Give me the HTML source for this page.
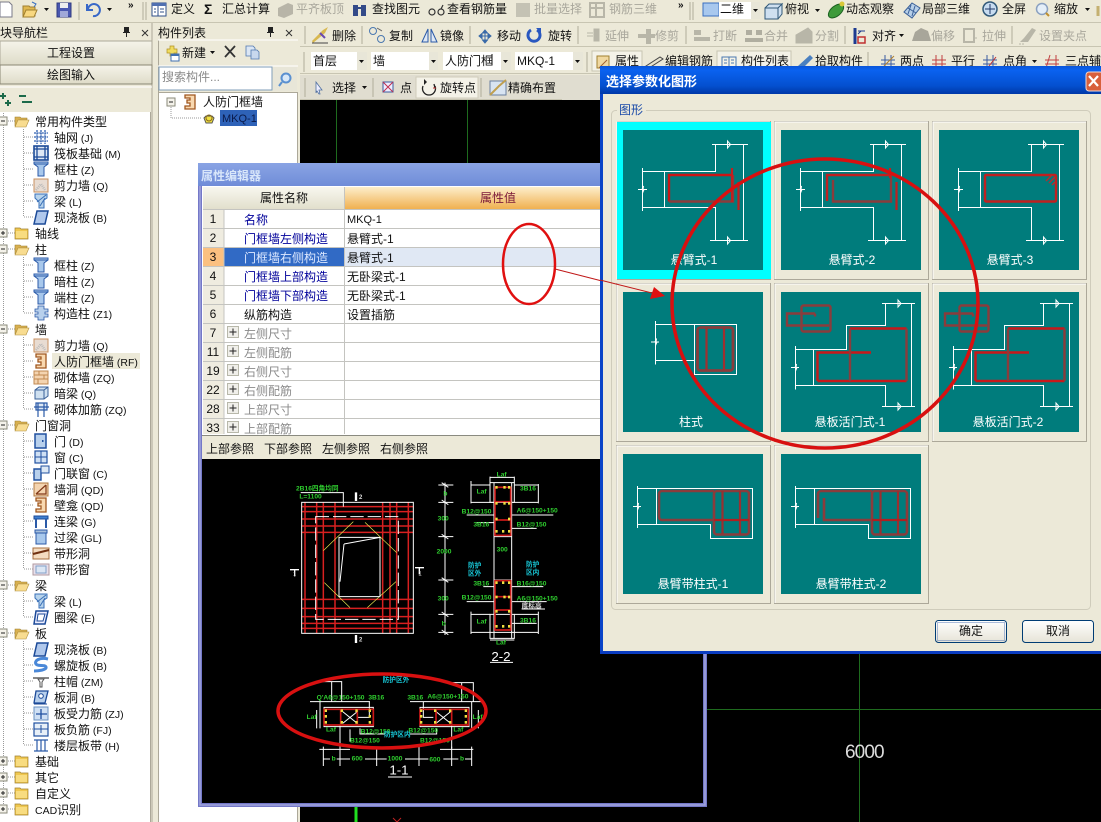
<!DOCTYPE html>
<html><head><meta charset="utf-8">
<style>
html,body{margin:0;padding:0;background:#ece9d8;width:1101px;height:822px;overflow:hidden}
svg{display:block;position:absolute;left:0;top:0}
text{font-family:"Liberation Sans","WenQuanYi Zen Hei","Noto Sans CJK SC",sans-serif;font-size:12px;fill:#111}
.l{font-size:10.5px}
.g{fill:#a9a79c}
.b{fill:#00009a}
.h{fill:#8a8a8a}
.w{fill:#fff}
.d{font-size:20px;fill:#2fcf2f;font-weight:bold}
.c{font-size:20px;fill:#18c8d8;font-weight:bold}
.big{font-size:40px;fill:#fff}
</style></head><body>
<svg width="1101" height="822" viewBox="0 0 1101 822" xmlns="http://www.w3.org/2000/svg">
<defs>
<linearGradient id="btn" x1="0" y1="0" x2="0" y2="1"><stop offset="0" stop-color="#f6f4ea"/><stop offset="1" stop-color="#dedbc8"/></linearGradient>
<linearGradient id="org" x1="0" y1="0" x2="0" y2="1"><stop offset="0" stop-color="#fdeecb"/><stop offset="1" stop-color="#f0b050"/></linearGradient>
<linearGradient id="hd" x1="0" y1="0" x2="0" y2="1"><stop offset="0" stop-color="#f8f7ef"/><stop offset="1" stop-color="#e2dfcc"/></linearGradient>
<linearGradient id="tt" x1="0" y1="0" x2="0" y2="1"><stop offset="0" stop-color="#0a55d8"/><stop offset=".15" stop-color="#0a62f0"/><stop offset=".7" stop-color="#0450d0"/><stop offset="1" stop-color="#0038a8"/></linearGradient>
<linearGradient id="pt" x1="0" y1="0" x2="0" y2="1"><stop offset="0" stop-color="#8aa4e4"/><stop offset="1" stop-color="#6f8cd8"/></linearGradient>
<linearGradient id="okb" x1="0" y1="0" x2="0" y2="1"><stop offset="0" stop-color="#fff"/><stop offset="1" stop-color="#e6e3d6"/></linearGradient>
<g id="fo"><path d="M1 4h5l1 1h6v2H5L2 13H1z" fill="#d8b050" stroke="#a08030" stroke-width=".6"/><path d="M4 7h11l-3 7H1z" fill="#f8dc90" stroke="#b09040" stroke-width=".6"/></g>
<g id="fc"><path d="M1 3h5l1 1h7v10H1z" fill="#f0c850" stroke="#a08030" stroke-width=".7"/><path d="M2 6h11v7H2z" fill="#f8dc80"/></g>
<g id="grid"><path d="M1 4h14M1 8h14M1 12h14M4 1v14M8 1v14M12 1v14" stroke="#3060b0" stroke-width="1.3" stroke-dasharray="2 .6" fill="none"/></g>
<g id="raft"><rect x="1" y="1" width="14" height="14" fill="#dfe8f5" stroke="#1c4a98" stroke-width="1.6"/><path d="M4 1v14M12 1v14M1 4h14M1 12h14" stroke="#1c4a98" stroke-width="1.3"/></g>
<g id="col"><path d="M1 1h14v2l-4 3v9H5V6L1 3z" fill="#a8c8ec" stroke="#2b5aa8" stroke-width="1"/><path d="M1 3h14" stroke="#2b5aa8"/></g>
<g id="wq"><rect x="1" y="2" width="14" height="13" fill="#e8dcd2" stroke="#c89060" stroke-width="1"/><path d="M3 13l5-6 4 6" stroke="#bbb" stroke-width="2.5" fill="none" stroke-dasharray="1 1"/></g>
<g id="beam"><path d="M2 1h12v4l-3 2v8H6V9L2 5z" fill="#b8d4ec" stroke="#3a70b8"/><path d="M4 9L13 2M7 13l5-8" stroke="#3a70b8"/></g>
<g id="slab"><path d="M4 2h11l-3 13H1z" fill="#b0c8ec" stroke="#1c4a98" stroke-width="1.5"/></g>
<g id="gz"><path d="M5 1h6v3h4v3h-3v2h3v3h-4v3H5v-3H2V9h3V7H2V4h3z" fill="#b8d0ec" stroke="#2b5aa8" stroke-width=".8"/></g>
<g id="rf"><path d="M3 1h10v14H3v-3h5v-3H5V6h3V4H3z" fill="#f8d8b0" stroke="#a05820" stroke-width="1.3"/></g>
<g id="brick"><rect x="1" y="2" width="14" height="13" fill="#f4d4b0" stroke="#c08850"/><path d="M1 6h14M1 10h14M6 2v4M11 6v4M5 10v5" stroke="#c08850"/></g>
<g id="an"><path d="M2 5l4-3h9v9l-4 3H2z" fill="#cfe0f0" stroke="#3a6098"/><path d="M2 5h9v9M11 5l4-3" stroke="#3a6098" fill="none"/></g>
<g id="qj"><path d="M3 2h11v7H3zM1 6h15M5 2v14M11 2v14" fill="#dde8f4" stroke="#2b5aa8" stroke-width="1.2"/></g>
<g id="door"><rect x="2" y="1" width="11" height="14" fill="#b8d0ec" stroke="#2050a0" stroke-width="1.5"/><rect x="9" y="7" width="1.5" height="2" fill="#2050a0"/></g>
<g id="win"><rect x="2" y="2" width="12" height="12" fill="#cfe0f4" stroke="#2050a0" stroke-width="1.2"/><path d="M8 2v12M2 8h12" stroke="#2050a0"/></g>
<g id="mlc"><path d="M1 4h7v11H1z" fill="#b8d0ec" stroke="#2050a0" stroke-width="1.4"/><path d="M8 1h8v7H8z" fill="#dde8f4" stroke="#2050a0"/></g>
<g id="qd"><rect x="1" y="2" width="14" height="13" fill="#f4d4b0" stroke="#b07840"/><path d="M3 13L13 4M13 4v9H3" stroke="#803818" fill="none" stroke-width="1.2"/></g>
<g id="lian"><path d="M1 3h14v3H1z" fill="#4080d0" stroke="#1c4a98"/><path d="M3 6v9M13 6v9" stroke="#2b5aa8" stroke-width="2"/></g>
<g id="guo"><path d="M2 1h12v3H2z" fill="#a8c0dc" stroke="#2b5aa8"/><rect x="3" y="4" width="10" height="11" fill="#a8c8ec" stroke="#2b5aa8"/></g>
<g id="dx"><rect x="0" y="3" width="16" height="11" fill="#f4dcc0" stroke="#a87040"/><path d="M0 9L16 5" stroke="#703010" stroke-width="2"/></g>
<g id="dc"><rect x="0" y="3" width="16" height="11" fill="#e8e0ec" stroke="#b09aa0"/><rect x="3" y="5" width="10" height="7" fill="#dbe6f4" stroke="#80a0c8"/></g>
<g id="ql"><path d="M3 2h12l-3 13H1z" fill="#eef" stroke="#1c4a98" stroke-width="1.5"/><path d="M5 5h7l-2 7H4z" fill="#fff" stroke="#1c4a98"/></g>
<g id="lx"><path d="M15 2C6 0 1 4 3 7s9 0 10 3-8 4-12 4" stroke="#4a88d8" stroke-width="3" fill="none"/></g>
<g id="zm"><path d="M0 4h16v2H0z" fill="#888"/><path d="M5 6h6l-2 3v5H7V9z" fill="#fff" stroke="#555"/></g>
<g id="bd"><path d="M3 2h12l-3 12H1z" fill="#b8d0ec" stroke="#1c4a98" stroke-width="1.3"/><circle cx="8" cy="7" r="2.3" fill="#fff" stroke="#1c4a98"/><path d="M1 15h13" stroke="#1c4a98"/></g>
<g id="bs"><rect x="1" y="2" width="14" height="13" fill="#cfe0f4" stroke="#6a90c0"/><path d="M3 9h11M8 4v10" stroke="#2050a0" stroke-width="1.3"/></g>
<g id="bf"><rect x="1" y="2" width="14" height="13" fill="#e8f0f8" stroke="#2050a0" stroke-width="1.2"/><path d="M1 8h14M8 4v8" stroke="#2050a0"/></g>
<g id="lb"><path d="M1 3h14M1 14h14M4 3v11M8 3v11M12 3v11" stroke="#2b5aa8" stroke-width="1.2"/></g>
<g id="mk"><rect x="0" y="0" width="8" height="8" fill="#f4f2ea" stroke="#8a8a7a"/><path d="M2 4h4" stroke="#222"/></g>
<g id="pk"><rect x="0" y="0" width="8" height="8" fill="#f4f2ea" stroke="#8a8a7a"/><path d="M2 4h4M4 2v4" stroke="#222"/></g>
<g id="ar"><path d="M0 0h5L2.500 3z" fill="#111"/></g>
<g id="pin"><path d="M2 0h5v5h1v1H5v4H4V6H1V5h1z" fill="#222"/></g>
<g id="xx"><path d="M1 1l6 6M7 1L1 7" stroke="#333" fill="none"/></g>
<g id="plus"><rect x=".5" y=".5" width="11" height="11" fill="#f0efea" stroke="#b8b8aa"/><path d="M2.500 6h7M6 2.500v7" stroke="#222"/></g>
<g id="wl" stroke="#fff" stroke-width="1" fill="none"><path d="M89 14.500h36M92.500 14.500V41.500H19.500M19.500 38V81M41.500 41.500V77.500M19.500 77.500H92.500V110.500M87 110.500H125M120.500 14.500V110.500"/><path d="M15 59.500h4l1.500-3.500-1 7 1.500-3.500h3M104.500 11v7l3-3.500zM104.500 107v7l3-3.500z"/></g>
<g id="d1"><use href="#wl"/><path d="M46 71.500V45H110" fill="none" stroke="#cc1515" stroke-width="2.400"/><path d="M46 71.500H110V45" fill="none" stroke="#8a3c3c" stroke-width="2.400"/><path d="M109 38v34M115.500 52V80" stroke="#c02020" stroke-width="2.200"/></g>
<g id="d2"><use href="#wl"/><path d="M46 71V45H110" fill="none" stroke="#c02020" stroke-width="2.400"/><path d="M52 50V71.500H110V45" fill="none" stroke="#8a3c3c" stroke-width="2.400"/><path d="M115.500 52V80M109 38v10" stroke="#c02020" stroke-width="2.200"/></g>
<g id="d3"><use href="#wl"/><rect x="46" y="45" width="71" height="26.500" rx="1" fill="none" stroke="#c02020" stroke-width="2.400"/><path d="M107 51l6-6M110 53l6-6M113 55l3-3" stroke="#b03030" stroke-width="1.500"/></g>
<g id="d4"><path d="M32.500 29V72.500M32.500 32.500H113.500V82.500H71.500V32.500M32.500 68.500H71.500M28 50h4l1.500-3.500-1 7 1.500-3.500h2" stroke="#fff" fill="none"/><rect x="74.500" y="35.500" width="35.500" height="43" rx="3" fill="none" stroke="#8a3c3c" stroke-width="2.800"/><path d="M83.500 36V78M101 36V78" stroke="#a03030" stroke-width="2.200"/></g>
<g id="d5"><path d="M101 11.500H134M104.500 11.500V33.500H65.500V57.500H14.500M14.500 54V97.500M32.500 57.500V93.500M14.500 93.500H104.500V114.500M101 114.500H134M130.500 11.500V114.500M10 75.500h4l1.500-3.500-1 7 1.500-3.500h2M117 8v7l3-3.500zM117 111v7l3-3.500z" stroke="#fff" fill="none"/><path d="M69 36.500H125.500M36.500 89H125.500M90 60.500H36.500V89" fill="none" stroke="#c8181a" stroke-width="2.400"/><path d="M125.500 36.500V89M69 36.500V89" stroke="#8a3c3c" stroke-width="2.400"/><rect x="20.500" y="13.500" width="29" height="26" rx="2" fill="none" stroke="#8a3c3c" stroke-width="2.400"/><path d="M34 21.500H6V33.500H48M34 21.500v3" fill="none" stroke="#8a3c3c" stroke-width="2.400"/></g>
<g id="dw"><path d="M14.500 32V74M14.500 34.500H129.500V84.500H87.500V70.500H14.500M33.500 34.500V70.500M10 52.500h4l1.500-3.500-1 7 1.500-3.500h2" stroke="#fff" fill="none"/></g>
<g id="d7"><use href="#dw"/><path d="M91 37H39a3 3 0 0 0-3 3V63a3 3 0 0 0 3 3H91" fill="none" stroke="#8a3c3c" stroke-width="2.600"/><rect x="91" y="37" width="35" height="43.500" rx="3" fill="none" stroke="#8a3c3c" stroke-width="2.600"/><path d="M99.500 37V80M117 37V80" stroke="#9a3030" stroke-width="2.200"/><path d="M91 66H126" stroke="#b02020" stroke-width="2.200"/></g>
<g id="d8"><use href="#dw"/><path d="M37 64V40a3 3 0 0 1 3-3H91M43 44V66H91" fill="none" stroke="#8a3c3c" stroke-width="2.600"/><rect x="91" y="37" width="35" height="43.500" rx="3" fill="none" stroke="#8a3c3c" stroke-width="2.600"/><path d="M99.500 37V80M117 37V80" stroke="#9a3030" stroke-width="2.200"/><path d="M91 66H126" stroke="#b02020" stroke-width="2.200"/></g>
</defs>

<!-- base -->
<rect width="1101" height="822" fill="#ece9d8"/>
<rect x="300" y="100" width="801" height="722" fill="#000"/>
<path d="M336.500 100V163M467.500 100V163M859.500 653V822M707 709.500H1101" stroke="#1e6b1e"/>
<path d="M356 805V822" stroke="#20e020" stroke-width="3"/>
<path d="M393 818l8 8M401 818l-8 8" stroke="#c02020"/>
<text x="845" y="758" style="font-size:19px;fill:#dcdcdc;letter-spacing:-.9px">6000</text>
<rect x="300" y="75" width="300" height="25" fill="#e0ddd0"/>

<!-- toolbar rows -->
<rect y="0" width="1101" height="22" fill="#ece9d8"/>
<path d="M0 22.500H1101M300 46.500H1101M300 73.500H1101M300 99.500H562" stroke="#c8c5b2"/>
<path d="M79 2V20M143 2V20M146 2V20M690 2V20M693 2V20M305 26V44M362 26V44M470 26V44M578 26V44M686 26V44M845 26V44M1012 26V44M304 52V72M587 52V72M868 52V72M305 78V97M373 78V97M481 78V97" stroke="#b0ad9a"/>

<!-- row 1 -->
<path d="M0 2h9l3 3v12H0z" fill="#fff" stroke="#7a7a88"/>
<path d="M23 6h6l1 1h5v9H23z" fill="#e0b850" stroke="#a08030"/><path d="M26 10h11l-3 7H23z" fill="#f8d880" stroke="#a08030"/><path d="M32 2l4 2-2 3" stroke="#3a70c0" fill="none"/>
<use href="#ar" x="44" y="8"/>
<rect x="57" y="3" width="14" height="14" fill="#4a58b0" stroke="#303a80"/><rect x="60" y="3" width="8" height="5" fill="#eee"/><rect x="60" y="11" width="8" height="6" fill="#a0a8d8"/>
<path d="M88 9a6 6 0 1 1 5 7M87 4v6h6" stroke="#3868c8" stroke-width="2" fill="none"/>
<use href="#ar" x="107" y="8"/>
<text x="128" y="8" style="font-size:10px;font-weight:bold">»</text>
<rect x="152" y="3" width="14" height="13" fill="#fff" stroke="#30508a"/><rect x="152" y="3" width="14" height="3" fill="#5070b0"/><path d="M158 6v10M154 9h2M154 12h2M160 9h4M160 12h4" stroke="#30508a"/>
<text x="171" y="13">定义</text>
<text x="204" y="14" style="font-size:14px;font-weight:bold">Σ</text>
<text x="222" y="13">汇总计算</text>
<path d="M278 8l10-5 5 2v9l-9 4-6-2z" fill="#b8b5a8"/>
<text x="296" y="13" class="g">平齐板顶</text>
<path d="M353 5h5v11h-5zM361 5h5v11h-5z" fill="#334a88"/><path d="M358 8h3" stroke="#334a88" stroke-width="2"/>
<text x="372" y="13">查找图元</text>
<path d="M429 12a3 3 0 1 0 6 0 3 3 0 1 0-6 0M438 12a3 3 0 1 0 6 0 3 3 0 1 0-6 0M441 9l2-4" stroke="#333" fill="none" stroke-width="1.200"/>
<text x="447" y="13">查看钢筋量</text>
<path d="M516 3h14v14h-14zM522 8l7 4-7 3z" fill="#c4c2b4"/>
<text x="534" y="13" class="g">批量选择</text>
<path d="M590 3h14v14h-14z M590 8h14M596 3v14" fill="none" stroke="#b8b6a8" stroke-width="2"/>
<text x="609" y="13" class="g">钢筋三维</text>
<text x="678" y="8" style="font-size:10px;font-weight:bold">»</text>
<rect x="703" y="3" width="16" height="13" fill="#a8c8ee" stroke="#3a70c0"/>
<rect x="719" y="2" width="33" height="17" fill="#fff"/>
<text x="720" y="13">二维</text>
<rect x="751" y="2" width="9" height="17" fill="#e8e6d8"/><use href="#ar" x="753" y="9"/>
<path d="M765 8h13v11h-13zM765 8l4-4h13l-4 4M778 8l4-4v10l-4 5" fill="#cfe0f0" stroke="#305878"/>
<text x="785" y="13">俯视</text><use href="#ar" x="815" y="9"/>
<ellipse cx="836" cy="11" rx="9" ry="5" transform="rotate(-40 836 11)" fill="#3e9a3a" stroke="#1c6020"/><circle cx="842" cy="4" r="2.500" fill="#d8c838"/>
<text x="846" y="13">动态观察</text>
<path d="M904 12l8-9 8 5-8 10z" fill="#b8d0e8" stroke="#3a6098"/><path d="M908 8l8 5M911 5l-3 9M915 6l-3 10" stroke="#3a6098"/>
<text x="922" y="13">局部三维</text>
<circle cx="990" cy="9" r="7" fill="#c8dcf0" stroke="#305878" stroke-width="1.500"/><path d="M990 4v10M985 9h10" stroke="#203868"/>
<text x="1002" y="13">全屏</text>
<circle cx="1042" cy="9" r="5.500" fill="#e4eef8" stroke="#8aa0c0" stroke-width="1.500"/><path d="M1046 13l3 3" stroke="#c09030" stroke-width="2"/>
<text x="1054" y="13">缩放</text><use href="#ar" x="1085" y="8"/>
<path d="M1098 6v10" stroke="#c4b070" stroke-width="3"/>

<!-- row 2 -->
<path d="M313 43l12-10 3-6-5 3-11 11z" fill="#d8b850"/><path d="M312 43h16" stroke="#444"/><path d="M320 33l5 5" stroke="#6a4ab0" stroke-width="2"/>
<text x="332" y="40">删除</text>
<circle cx="373" cy="31" r="3.500" fill="none" stroke="#4a78b0"/><circle cx="381" cy="39" r="3.500" fill="none" stroke="#4a78b0"/><path d="M377 28l5 3" stroke="#666"/>
<text x="389" y="40">复制</text>
<path d="M422 42l6-13v13zM437 42l-6-13v13z" fill="#dfe8f4" stroke="#2b5aa8"/>
<text x="440" y="40">镜像</text>
<path d="M479 36h12M485 30v13M479 36l3-2.500v5zM491 36l-3-2.500v5zM485 30l-2.500 3h5zM485 43l-2.500-3h5z" stroke="#3a6aa8" fill="#3a6aa8"/>
<text x="497" y="40">移动</text>
<path d="M531 30a6 6 0 1 0 6 0" stroke="#2a58c0" stroke-width="3" fill="none"/><path d="M536 28h5v5z" fill="#2a58c0"/>
<text x="548" y="40">旋转</text>
<path d="M587 33h6M587 36h6M594 29h5v12h-5z" fill="#b8b6a8" stroke="#b8b6a8"/>
<text x="605" y="40" class="g">延伸</text>
<path d="M638 34h8v-5h5v5h4v4h-4v6h-5v-6h-8z" fill="#b8b6a8"/>
<text x="655" y="40" class="g">修剪</text>
<path d="M694 30h7v5h-7zM694 37h16v4h-16z" fill="#b8b6a8"/>
<text x="713" y="40" class="g">打断</text>
<path d="M746 30h6v5h-6zM756 30h6v5h-6zM745 38h18v4h-18z" fill="#b0aea0"/>
<text x="764" y="40" class="g">合并</text>
<path d="M796 43v-8l12-7 4 4v11zM796 37h16" fill="#b8b6a8" stroke="#b8b6a8"/>
<text x="815" y="40" class="g">分割</text>
<path d="M855 28v16" stroke="#1c3a90" stroke-width="3"/><rect x="858" y="37" width="7" height="6" fill="none" stroke="#c03030" stroke-width="1.500"/><path d="M858 31h7M858 34l3-3" stroke="#1c3a90" fill="none"/>
<text x="872" y="40">对齐</text><use href="#ar" x="899" y="34"/>
<path d="M912 41l3-9 6-4 7 3 3 10z" fill="#a8a69a"/>
<text x="931" y="40" class="g">偏移</text>
<rect x="964" y="29" width="10" height="13" fill="none" stroke="#b8b6a8" stroke-width="2"/><path d="M974 38h3" stroke="#b8b6a8"/>
<text x="982" y="40" class="g">拉伸</text>
<path d="M1020 42h8l8-12-4-2-8 10z" fill="#b8b6a8"/><path d="M1019 44h6" stroke="#b8b6a8" stroke-dasharray="2 1"/>
<text x="1039" y="40" class="g">设置夹点</text>

<!-- row 3 -->
<rect x="311" y="52" width="56" height="18" fill="#fff"/><rect x="357" y="52" width="10" height="18" fill="#e8e6d8"/><use href="#ar" x="359" y="60"/><text x="313" y="65">首层</text>
<rect x="371" y="52" width="67" height="18" fill="#fff"/><rect x="429" y="52" width="9" height="18" fill="#e8e6d8"/><use href="#ar" x="431" y="60"/><text x="373" y="65">墙</text>
<rect x="443" y="52" width="68" height="18" fill="#fff"/><rect x="501" y="52" width="10" height="18" fill="#e8e6d8"/><use href="#ar" x="503" y="60"/><text x="445" y="65">人防门框</text><path d="M492 54v11" stroke="#111"/>
<rect x="515" y="52" width="68" height="18" fill="#fff"/><rect x="573" y="52" width="10" height="18" fill="#e8e6d8"/><use href="#ar" x="575" y="60"/><text x="517" y="65">MKQ-1</text>
<rect x="592" y="51" width="50" height="20" fill="#f4f2e8" stroke="#c8c5b2"/>
<path d="M597 56h12v12h-12z" fill="#f0d8a0" stroke="#a08030"/><path d="M599 68l8-8" stroke="#a06030"/>
<text x="615" y="65">属性</text>
<path d="M646 66l14-9 3 2-14 9z" fill="#e8e4d0" stroke="#444"/>
<text x="665" y="65">编辑钢筋</text>
<rect x="717" y="51" width="74" height="20" fill="#f4f2e8" stroke="#c8c5b2"/>
<path d="M722 57h14v10h-14zM729 57v10M724 60h3M731 60h3M724 63h3M731 63h3" fill="none" stroke="#4a78b0"/>
<text x="741" y="65">构件列表</text>
<path d="M798 66l12-11 3 3-11 11z" fill="#4a80c0"/>
<text x="815" y="65">拾取构件</text>
<path d="M881 60h14M881 64h14M885 55v13M891 55v13" stroke="#3a5aa0"/><path d="M884 66l10-10" stroke="#b08030"/>
<text x="900" y="65">两点</text>
<path d="M932 60h14M932 64h14M936 55v13M942 55v13" stroke="#c04040"/>
<text x="951" y="65">平行</text>
<path d="M983 60h14M983 64h14M987 55v13M993 55v13" stroke="#3a5aa0"/><path d="M989 66l7-9" stroke="#c03030"/>
<text x="1003" y="65">点角</text><use href="#ar" x="1032" y="60"/>
<path d="M1045 60h14M1045 64h14M1050 55l-4 13M1056 55v13" stroke="#c04040"/>
<text x="1065" y="65">三点辅轴</text>

<!-- row 4 -->
<path d="M316 82l6 8-3 0 1 4-1 0-2-3-1 2z" fill="#eef" stroke="#5070a0" stroke-width=".8"/>
<text x="332" y="92">选择</text><use href="#ar" x="362" y="86"/>
<rect x="383" y="82" width="10" height="10" fill="#eef" stroke="#3a5aa0"/><path d="M383 82l10 10M393 82l-10 10" stroke="#c03050"/>
<text x="400" y="92">点</text>
<rect x="416" y="77" width="62" height="21" fill="#f4f2e8" stroke="#cfccba"/>
<path d="M423 86a6.500 6.500 0 1 0 12 0M434 84l1 4" stroke="#222" fill="none" stroke-width="1.300"/><path d="M424 79l3 3-3 3z" fill="#222"/><path d="M433 88h3" stroke="#c03030"/>
<text x="440" y="92">旋转点</text>
<path d="M490 81h16v14h-16z" fill="#d8e4f2" stroke="#6a80a0"/><path d="M490 95l9-9 7-6" stroke="#c0a050" stroke-width="2"/>
<text x="508" y="92">精确布置</text>

<!-- left nav panel -->
<text x="0" y="37">块导航栏</text>
<use href="#pin" x="122" y="27"/><use href="#xx" x="141" y="29"/>
<path d="M152 23V822" stroke="#aca899"/>
<rect x="0" y="41" width="152" height="24" fill="url(#btn)" stroke="#aca899"/>
<rect x="0" y="65" width="152" height="19" fill="url(#btn)" stroke="#8a8774"/>
<text x="47" y="57">工程设置</text>
<text x="47" y="79">绘图输入</text>
<path d="M0 87H152" stroke="#fff"/>
<path d="M0 96h6M3 93v6M5 103h6M8 100v6" stroke="#1c6a4a" stroke-width="2"/>
<path d="M19 96h7M22 102h10" stroke="#1c6a4a" stroke-width="2"/>
<rect x="0" y="112" width="151" height="710" fill="#fff"/>
<path d="M150.500 112V822" stroke="#aca899"/>
<path d="M3.500 113V809M23.500 129V217M23.500 257V313M23.500 337V409M23.500 433V569M23.500 593V617M23.500 641V745" stroke="#999" stroke-dasharray="1 1"/>
<path d="M8 121h7M8 233h7M8 249h7M8 329h7M8 425h7M8 585h7M8 633h7M8 761h7M8 777h7M8 793h7M8 809h7M24 137h10M24 153h10M24 169h10M24 185h10M24 201h10M24 217h10M24 265h10M24 281h10M24 297h10M24 313h10M24 345h10M24 361h10M24 377h10M24 393h10M24 409h10M24 441h10M24 457h10M24 473h10M24 489h10M24 505h10M24 521h10M24 537h10M24 553h10M24 569h10M24 601h10M24 617h10M24 649h10M24 665h10M24 681h10M24 697h10M24 713h10M24 729h10M24 745h10" stroke="#999" stroke-dasharray="1 1"/>
<g>
<use href="#mk" x="-1" y="117"/><use href="#pk" x="-1" y="229"/><use href="#mk" x="-1" y="245"/><use href="#mk" x="-1" y="325"/><use href="#mk" x="-1" y="421"/><use href="#mk" x="-1" y="581"/><use href="#mk" x="-1" y="629"/><use href="#pk" x="-1" y="757"/><use href="#pk" x="-1" y="773"/><use href="#pk" x="-1" y="789"/><use href="#pk" x="-1" y="805"/>
<use href="#fo" x="14" y="113"/><use href="#fc" x="14" y="225"/><use href="#fo" x="14" y="241"/><use href="#fo" x="14" y="321"/><use href="#fo" x="14" y="417"/><use href="#fo" x="14" y="577"/><use href="#fo" x="14" y="625"/><use href="#fc" x="14" y="753"/><use href="#fc" x="14" y="769"/><use href="#fc" x="14" y="785"/><use href="#fc" x="14" y="801"/>
<use href="#grid" x="33" y="129"/><use href="#raft" x="33" y="145"/><use href="#col" x="33" y="161"/><use href="#wq" x="33" y="177"/><use href="#beam" x="33" y="193"/><use href="#slab" x="33" y="209"/>
<use href="#col" x="33" y="257"/><use href="#col" x="33" y="273"/><use href="#col" x="33" y="289"/><use href="#gz" x="33" y="305"/>
<use href="#wq" x="33" y="337"/><use href="#rf" x="33" y="353"/><use href="#brick" x="33" y="369"/><use href="#an" x="33" y="385"/><use href="#qj" x="33" y="401"/>
<use href="#door" x="33" y="433"/><use href="#win" x="33" y="449"/><use href="#mlc" x="33" y="465"/><use href="#qd" x="33" y="481"/><use href="#rf" x="33" y="497"/><use href="#lian" x="33" y="513"/><use href="#guo" x="33" y="529"/><use href="#dx" x="33" y="545"/><use href="#dc" x="33" y="561"/>
<use href="#beam" x="33" y="593"/><use href="#ql" x="33" y="609"/>
<use href="#slab" x="33" y="641"/><use href="#lx" x="33" y="657"/><use href="#zm" x="33" y="673"/><use href="#bd" x="33" y="689"/><use href="#bs" x="33" y="705"/><use href="#bf" x="33" y="721"/><use href="#lb" x="33" y="737"/>
</g>
<rect x="52" y="353" width="88" height="16" fill="#ece9d8"/>
<g>
<text x="35" y="126">常用构件类型</text>
<text x="54" y="142">轴网<tspan class="l"> (J)</tspan></text>
<text x="54" y="158">筏板基础<tspan class="l"> (M)</tspan></text>
<text x="54" y="174">框柱<tspan class="l"> (Z)</tspan></text>
<text x="54" y="190">剪力墙<tspan class="l"> (Q)</tspan></text>
<text x="54" y="206">梁<tspan class="l"> (L)</tspan></text>
<text x="54" y="222">现浇板<tspan class="l"> (B)</tspan></text>
<text x="35" y="238">轴线</text>
<text x="35" y="254">柱</text>
<text x="54" y="270">框柱<tspan class="l"> (Z)</tspan></text>
<text x="54" y="286">暗柱<tspan class="l"> (Z)</tspan></text>
<text x="54" y="302">端柱<tspan class="l"> (Z)</tspan></text>
<text x="54" y="318">构造柱<tspan class="l"> (Z1)</tspan></text>
<text x="35" y="334">墙</text>
<text x="54" y="350">剪力墙<tspan class="l"> (Q)</tspan></text>
<text x="54" y="366">人防门框墙<tspan class="l"> (RF)</tspan></text>
<text x="54" y="382">砌体墙<tspan class="l"> (ZQ)</tspan></text>
<text x="54" y="398">暗梁<tspan class="l"> (Q)</tspan></text>
<text x="54" y="414">砌体加筋<tspan class="l"> (ZQ)</tspan></text>
<text x="35" y="430">门窗洞</text>
<text x="54" y="446">门<tspan class="l"> (D)</tspan></text>
<text x="54" y="462">窗<tspan class="l"> (C)</tspan></text>
<text x="54" y="478">门联窗<tspan class="l"> (C)</tspan></text>
<text x="54" y="494">墙洞<tspan class="l"> (QD)</tspan></text>
<text x="54" y="510">壁龛<tspan class="l"> (QD)</tspan></text>
<text x="54" y="526">连梁<tspan class="l"> (G)</tspan></text>
<text x="54" y="542">过梁<tspan class="l"> (GL)</tspan></text>
<text x="54" y="558">带形洞</text>
<text x="54" y="574">带形窗</text>
<text x="35" y="590">梁</text>
<text x="54" y="606">梁<tspan class="l"> (L)</tspan></text>
<text x="54" y="622">圈梁<tspan class="l"> (E)</tspan></text>
<text x="35" y="638">板</text>
<text x="54" y="654">现浇板<tspan class="l"> (B)</tspan></text>
<text x="54" y="670">螺旋板<tspan class="l"> (B)</tspan></text>
<text x="54" y="686">柱帽<tspan class="l"> (ZM)</tspan></text>
<text x="54" y="702">板洞<tspan class="l"> (B)</tspan></text>
<text x="54" y="718">板受力筋<tspan class="l"> (ZJ)</tspan></text>
<text x="54" y="734">板负筋<tspan class="l"> (FJ)</tspan></text>
<text x="54" y="750">楼层板带<tspan class="l"> (H)</tspan></text>
<text x="35" y="766">基础</text>
<text x="35" y="782">其它</text>
<text x="35" y="798">自定义</text>
<text x="35" y="814"><tspan class="l">CAD</tspan>识别</text>
</g>

<!-- component list panel -->
<text x="158" y="37">构件列表</text>
<use href="#pin" x="266" y="27"/><use href="#xx" x="285" y="29"/>
<path d="M158.500 40V100" stroke="#aca899"/>
<path d="M158 40H298M158 66H298" stroke="#fff"/>
<path d="M170 46h4v3h3v4h-3v3h-4v-3h-3v-4h3z" fill="#f0dc60" stroke="#b09020" stroke-width=".7"/>
<rect x="171" y="54" width="8" height="7" fill="#fff" stroke="#4070b0"/><rect x="171" y="54" width="8" height="2" fill="#4070b0"/>
<text x="182" y="57">新建</text><use href="#ar" x="210" y="51"/>
<path d="M225 46l10 11M235 46l-10 11" stroke="#333" stroke-width="1.800"/>
<path d="M246 46h7l2 2v8h-9z" fill="#dbe6f4" stroke="#5078b0" stroke-width=".8"/><path d="M251 50h6l2 2v7h-8z" fill="#c8d8ee" stroke="#5078b0" stroke-width=".8"/>
<rect x="159" y="67" width="113" height="23" fill="#fff" stroke="#7f9db9"/>
<text x="162" y="81" class="h">搜索构件...</text>
<rect x="273" y="67" width="24" height="24" fill="#e8e6d8"/>
<circle cx="286" cy="78" r="4.500" fill="#d8e8f8" stroke="#5a90d0" stroke-width="2"/><path d="M282 82l-3 4" stroke="#5a90d0" stroke-width="2"/>
<rect x="158" y="92" width="140" height="730" fill="#fff"/>
<path d="M158.500 92V822M297.500 92V822M158 92.500H298" stroke="#aca899"/>
<use href="#mk" x="167" y="98"/>
<path d="M171 107V118H202" stroke="#999" stroke-dasharray="1 1" fill="none"/>
<use href="#rf" x="182" y="94"/>
<text x="203" y="106">人防门框墙</text>
<path d="M204 118l2-2h6l2 2v0l-2 5h-6z" fill="#f0e040" stroke="#555"/><circle cx="209" cy="118" r="3" fill="none" stroke="#8a6a20"/>
<rect x="220" y="110" width="37" height="16" fill="#2e62b8"/>
<text x="222" y="122" style="font-size:11px;fill:#0a1a4a">MKQ-1</text>

<!-- property editor -->
<rect x="198" y="163" width="509" height="644" fill="#7478c8"/>
<path d="M705 186V805H200V186" fill="none" stroke="#a0a4dc" stroke-width="1.500"/>
<rect x="198" y="163" width="509" height="23" fill="url(#pt)"/>
<text x="201" y="180" style="fill:#d8e6fa;font-weight:bold">属性编辑器</text>
<rect x="202" y="186" width="501" height="250" fill="#fff"/>
<rect x="202" y="436" width="501" height="23" fill="#ece9d8"/>
<rect x="202" y="459" width="501" height="344" fill="#000"/>
<rect x="203" y="187" width="21" height="22" fill="url(#hd)"/>
<rect x="224" y="187" width="121" height="22" fill="url(#hd)"/>
<rect x="345" y="187" width="260" height="22" fill="url(#org)"/>
<rect x="203" y="210" width="21" height="224" fill="#efece0"/>
<rect x="345" y="247" width="260" height="19" fill="#e0e8f4"/>
<rect x="203" y="247" width="21" height="19" fill="#fbc080"/>
<rect x="224" y="247" width="121" height="19" fill="#316ac5"/>
<path d="M203 209.500H605M203 228.500H605M203 247.500H605M203 266.500H605M203 285.500H605M203 304.500H605M203 323.500H605M203 342.500H605M203 361.500H605M203 380.500H605M203 399.500H605M203 418.500H605M224 210V434M344.500 187V434" stroke="#c4c4c0"/>
<path d="M202 435.500H703" stroke="#8a8a80"/>
<text x="260" y="202">属性名称</text>
<text x="480" y="202" style="fill:#7a1838">属性值</text>
<g style="font-size:11px">
<text x="213" y="223" text-anchor="middle">1</text><text x="213" y="242" text-anchor="middle">2</text><text x="213" y="261" text-anchor="middle">3</text><text x="213" y="280" text-anchor="middle">4</text><text x="213" y="299" text-anchor="middle">5</text><text x="213" y="318" text-anchor="middle">6</text><text x="213" y="337" text-anchor="middle">7</text><text x="213" y="356" text-anchor="middle">11</text><text x="213" y="375" text-anchor="middle">19</text><text x="213" y="394" text-anchor="middle">22</text><text x="213" y="413" text-anchor="middle">28</text><text x="213" y="432" text-anchor="middle">33</text>
</g>
<text x="244" y="224" class="b">名称</text>
<text x="244" y="243" class="b">门框墙左侧构造</text>
<text x="244" y="262" style="fill:#dce8ff">门框墙右侧构造</text>
<text x="244" y="281" class="b">门框墙上部构造</text>
<text x="244" y="300" class="b">门框墙下部构造</text>
<text x="244" y="319">纵筋构造</text>
<use href="#plus" x="227" y="326"/><use href="#plus" x="227" y="345"/><use href="#plus" x="227" y="364"/><use href="#plus" x="227" y="383"/><use href="#plus" x="227" y="402"/><use href="#plus" x="227" y="421"/>
<text x="244" y="338" class="h">左侧尺寸</text>
<text x="244" y="357" class="h">左侧配筋</text>
<text x="244" y="376" class="h">右侧尺寸</text>
<text x="244" y="395" class="h">右侧配筋</text>
<text x="244" y="414" class="h">上部尺寸</text>
<text x="244" y="433" class="h">上部配筋</text>
<text x="347" y="223" style="font-size:11px">MKQ-1</text>
<text x="347" y="243">悬臂式-1</text>
<text x="347" y="262">悬臂式-1</text>
<text x="347" y="281">无卧梁式-1</text>
<text x="347" y="300">无卧梁式-1</text>
<text x="347" y="319">设置插筋</text>
<text x="206" y="453">上部参照</text><text x="264" y="453">下部参照</text><text x="322" y="453">左侧参照</text><text x="380" y="453">右侧参照</text>

<!-- plan + 2-2 drawing -->
<g transform="translate(270 460) scale(.33333)">
<g stroke="#d82020" stroke-width="4.500" fill="none">
<path d="M95 140H430M95 155H430M95 177H430M95 198H430M95 217H430M95 418H430M95 445H430M95 470H430M95 490H430M95 505H430"/>
<path d="M105 127V520M140 127V520M160 127V520M195 127V520M338 127V520M360 127V520M380 127V520M415 127V520"/>
</g>
<rect x="95" y="127" width="335" height="393" fill="none" stroke="#fff" stroke-width="3"/>
<rect x="137" y="170" width="248" height="308" fill="none" stroke="#fff" stroke-width="3" stroke-dasharray="40 12"/>
<path d="M160 272L250 185M285 187L380 278M163 368L240 443M292 443L378 365" stroke="#e8e850" stroke-width="2"/>
<path d="M207 410V232H330V410z" fill="#000" stroke="#fff" stroke-width="3"/>
<path d="M222 252L330 232M222 252L210 365" stroke="#fff" stroke-width="3" fill="none"/>
<path d="M92 98H220V140" stroke="#fff" stroke-width="3" fill="none"/>
<path d="M258 97V123M258 525V549" stroke="#fff" stroke-width="7"/>
<path d="M60 329H87M435 323H462M74 329V349M448 323V343" stroke="#fff" stroke-width="4"/>
<text x="267" y="117" style="font-size:18px;fill:#ddd;font-weight:bold">2</text><text x="267" y="544" style="font-size:18px;fill:#ddd;font-weight:bold">2</text>
<text x="69" y="348" style="font-size:16px;fill:#ddd">1</text><text x="445" y="346" style="font-size:18px;fill:#ddd">1</text>
<text x="78" y="92" class="d">2B16四角均同</text>
<text x="88" y="116" class="d">L=1100</text>
<!-- 2-2 -->
<g stroke="#fff" stroke-width="3" fill="none">
<path d="M525 68V525M505 75H550M505 127H550M505 230H550M505 360H550M505 463H550M505 517H550"/>
<path d="M515 68l20 14M515 120l20 14M515 223l20 14M515 353l20 14M515 456l20 14M515 510l20 14"/>
<path d="M672 68V535M725 68V535M660 68H733V127H660ZM660 463H733V535H660Z"/>
<path d="M603 63V130M603 127H805M805 72V130M603 75H660M733 75H805M603 455V522M603 517H805M805 455V522M603 463H660M733 463H805"/>
<path d="M672 230H725M672 360H725M620 188H672M725 205H800M590 165H672M725 165H850M640 380H672M725 380H820M590 425H672M725 425H830M755 447H825M725 490H800"/>
<path d="M660 50V68M733 50V68M660 52H733M660 540H733"/>
</g>
<g fill="none" stroke="#c81818" stroke-width="5">
<path d="M675 82H722V226H675ZM675 362H722V510H675Z"/><path d="M675 125H722M675 180H722M675 410H722M675 450H722"/>
</g>
<g fill="#f0e040"><rect x="676" y="78" width="7" height="8"/><rect x="700" y="78" width="7" height="8"/><rect x="714" y="78" width="7" height="8"/><rect x="676" y="126" width="7" height="8"/><rect x="700" y="126" width="7" height="8"/><rect x="714" y="126" width="7" height="8"/><rect x="676" y="173" width="7" height="8"/><rect x="714" y="173" width="7" height="8"/><rect x="676" y="210" width="7" height="8"/><rect x="696" y="210" width="7" height="8"/><rect x="714" y="210" width="7" height="8"/><rect x="676" y="364" width="7" height="8"/><rect x="696" y="364" width="7" height="8"/><rect x="714" y="364" width="7" height="8"/><rect x="676" y="407" width="7" height="8"/><rect x="700" y="407" width="7" height="8"/><rect x="714" y="407" width="7" height="8"/><rect x="676" y="450" width="7" height="8"/><rect x="714" y="450" width="7" height="8"/><rect x="676" y="495" width="7" height="8"/><rect x="696" y="495" width="7" height="8"/><rect x="714" y="495" width="7" height="8"/></g>
<text x="680" y="50" class="d">Laf</text><text x="620" y="101" class="d">Laf</text><text x="620" y="490" class="d">Laf</text><text x="678" y="554" class="d">Laf</text>
<text x="750" y="92" class="d">3B16</text><text x="575" y="161" class="d">B12@150</text><text x="740" y="158" class="d">A6@150+150</text>
<text x="610" y="199" class="d">3B16</text><text x="740" y="199" class="d">B12@150</text><text x="680" y="274" class="d">300</text>
<text x="610" y="376" class="d">3B16</text><text x="740" y="376" class="d">B16@150</text><text x="575" y="419" class="d">B12@150</text><text x="740" y="421" class="d">A6@150+150</text>
<text x="750" y="488" class="d">3B16</text>
<text x="520" y="106" class="d">b</text><text x="503" y="182" class="d">300</text><text x="500" y="281" class="d">2000</text><text x="503" y="421" class="d">300</text><text x="515" y="497" class="d">b</text>
<text x="594" y="323" class="c">防护</text><text x="594" y="346" class="c">区外</text><text x="768" y="319" class="c">防护</text><text x="768" y="343" class="c">区内</text>
<text x="755" y="444" style="font-size:20px;fill:#e0e0e0;font-weight:bold">底标高</text>
<text x="664" y="603" class="big">2-2</text>
<path d="M660 607H729" stroke="#fff" stroke-width="3"/>
</g>
<!-- 1-1 -->
<g transform="translate(270 660) scale(.33333)">
<g stroke="#fff" stroke-width="3" fill="none">
<path d="M120 125H300M162 142H310V200H162ZM450 142H597V200H450ZM420 125H640"/>
<path d="M155 65H215V125M185 65V125M545 68H610V125M575 68V125M150 125V205M605 125V205"/>
<path d="M140 150V205M625 150V205M240 245V208M270 205V222H345M500 205V222H420M210 195V265M545 195V265"/>
<path d="M148 268H240M510 268H610M160 260V318M210 260V318M320 260V318M447 260V318M545 260V318M605 260V318"/>
<path d="M160 297H605"/>
<path d="M218 155L262 190M262 155L218 190M498 155L542 190M542 155L498 190"/>
<path d="M298 125V172H262M460 125V172H490"/>
</g>
<g stroke="#cc1818" stroke-width="5" fill="none"><path d="M162 148H310V195H162ZM450 148H595V195H450ZM212 150V192M262 150V192M498 150V192M545 150V192"/></g>
<g fill="#f0e040"><rect x="164" y="148" width="7" height="8"/><rect x="164" y="165" width="7" height="8"/><rect x="164" y="183" width="7" height="8"/><rect x="212" y="148" width="7" height="8"/><rect x="212" y="183" width="7" height="8"/><rect x="256" y="148" width="7" height="8"/><rect x="256" y="183" width="7" height="8"/><rect x="296" y="148" width="7" height="8"/><rect x="296" y="165" width="7" height="8"/><rect x="296" y="183" width="7" height="8"/><rect x="450" y="148" width="7" height="8"/><rect x="450" y="165" width="7" height="8"/><rect x="450" y="183" width="7" height="8"/><rect x="492" y="148" width="7" height="8"/><rect x="492" y="183" width="7" height="8"/><rect x="537" y="148" width="7" height="8"/><rect x="537" y="183" width="7" height="8"/><rect x="584" y="148" width="7" height="8"/><rect x="584" y="165" width="7" height="8"/><rect x="584" y="183" width="7" height="8"/></g>
<text x="140" y="119" class="d">Q'A6@150+150</text><text x="295" y="119" class="d">3B16</text><text x="412" y="119" class="d">3B16</text><text x="472" y="116" class="d">A6@150+150</text>
<text x="110" y="177" class="d">Laf</text><text x="168" y="215" class="d">Laf</text><text x="550" y="215" class="d">Laf</text><text x="608" y="177" class="d">Laf</text>
<text x="272" y="221" class="d">B12@150</text><text x="415" y="218" class="d">B12@150</text><text x="240" y="248" class="d">B12@150</text><text x="450" y="248" class="d">B12@150</text>
<text x="338" y="66" class="c">防护区外</text><text x="342" y="229" class="c">防护区内</text>
<rect x="180" y="287" width="20" height="20" fill="#000"/><rect x="240" y="287" width="45" height="20" fill="#000"/><rect x="350" y="287" width="55" height="20" fill="#000"/><rect x="475" y="287" width="45" height="20" fill="#000"/><rect x="565" y="287" width="20" height="20" fill="#000"/>
<text x="185" y="302" class="d">b</text><text x="245" y="302" class="d">600</text><text x="353" y="302" class="d">1000</text><text x="478" y="304" class="d">600</text><text x="570" y="302" class="d">b</text>
<text x="358" y="344" class="big">1-1</text>
<path d="M354 351H426" stroke="#fff" stroke-width="3"/>
</g>

<!-- annotation small ellipse & arrow (under dialog) -->
<ellipse cx="529" cy="264" rx="26" ry="40" fill="none" stroke="#e01010" stroke-width="2.500"/>
<ellipse cx="382" cy="711" rx="104" ry="37" fill="none" stroke="#d81010" stroke-width="3.500"/>
<path d="M555 269L602 281" stroke="#c01818"/>

<!-- dialog -->
<rect x="600" y="66" width="501" height="588" fill="#ece9d8"/>
<rect x="600" y="66" width="3" height="588" fill="#0a44c8"/>
<rect x="600" y="651" width="501" height="3" fill="#0a3cc0"/>
<rect x="600" y="66" width="501" height="28" fill="url(#tt)"/>
<text x="606" y="86" style="fill:#fff;font-weight:bold;font-size:13px">选择参数化图形</text>
<rect x="1086" y="72" width="17" height="19" rx="3" fill="#d8603c" stroke="#f0d8d0"/>
<path d="M1089 76l9 10M1098 76l-9 10" stroke="#fff" stroke-width="2.200"/>
<rect x="611.500" y="110.500" width="479" height="499" rx="4" fill="none" stroke="#cfccbb"/>
<rect x="617" y="104" width="29" height="10" fill="#ece9d8"/>
<text x="619" y="114" style="fill:#1a4aa8">图形</text>

<!-- tiles -->
<g stroke="#aca899" fill="#ece9d8"><path d="M617.500 121.500H770.500V279.500H617.500Z"/><path d="M774.500 121.500H928.500V279.500H774.500Z"/><path d="M932.500 121.500H1086.500V279.500H932.500Z"/><path d="M616.500 283.500H770.500V441.500H616.500Z"/><path d="M774.500 283.500H928.500V441.500H774.500Z"/><path d="M932.500 283.500H1086.500V441.500H932.500Z"/><path d="M616.500 445.500H770.500V603.500H616.500Z"/><path d="M774.500 445.500H928.500V603.500H774.500Z"/></g>
<g stroke="#fff" fill="none"><path d="M617 279V122H770M775 279V122H928M933 279V122H1086M617 441V284H770M775 441V284H928M933 441V284H1086M617 603V446H770M775 603V446H928"/></g>
<rect x="617" y="122" width="154" height="157" fill="#00ffff"/>
<g fill="#007c7c"><rect x="623" y="130" width="140" height="140"/><rect x="781" y="130" width="140" height="140"/><rect x="939" y="130" width="140" height="140"/><rect x="623" y="292" width="140" height="140"/><rect x="781" y="292" width="140" height="140"/><rect x="939" y="292" width="140" height="140"/><rect x="623" y="454" width="140" height="140"/><rect x="781" y="454" width="140" height="140"/></g>
<use href="#d1" x="623" y="130"/><use href="#d2" x="781" y="130"/><use href="#d3" x="939" y="130"/>
<use href="#d4" x="623" y="292"/><use href="#d5" x="781" y="292"/><use href="#d5" x="939" y="292"/>
<use href="#d7" x="623" y="454"/><use href="#d8" x="781" y="454"/>
<g class="w" text-anchor="middle">
<text x="694" y="264" class="w">悬臂式-1</text><text x="852" y="264" class="w">悬臂式-2</text><text x="1010" y="264" class="w">悬臂式-3</text>
<text x="691" y="426" class="w">柱式</text><text x="850" y="426" class="w">悬板活门式-1</text><text x="1008" y="426" class="w">悬板活门式-2</text>
<text x="693" y="588" class="w">悬臂带柱式-1</text><text x="851" y="588" class="w">悬臂带柱式-2</text>
</g>

<!-- buttons -->
<rect x="935.500" y="620.500" width="71" height="22" rx="3" fill="url(#okb)" stroke="#003c74"/>
<rect x="937.500" y="622.500" width="67" height="18" fill="none" stroke="#5a7ab8" stroke-dasharray="1 1"/>
<text x="971" y="635" text-anchor="middle">确定</text>
<rect x="1022.500" y="620.500" width="71" height="22" rx="3" fill="url(#okb)" stroke="#003c74"/>
<text x="1058" y="635" text-anchor="middle">取消</text>

<!-- big annotation circle + arrow -->
<ellipse cx="825" cy="303.500" rx="153" ry="144.500" fill="none" stroke="#d81010" stroke-width="3.500"/>
<path d="M600 280L652 293" stroke="#c01818"/>
<path d="M665 296L654 287L650 299z" fill="#e01010"/>
</svg>
</body></html>
